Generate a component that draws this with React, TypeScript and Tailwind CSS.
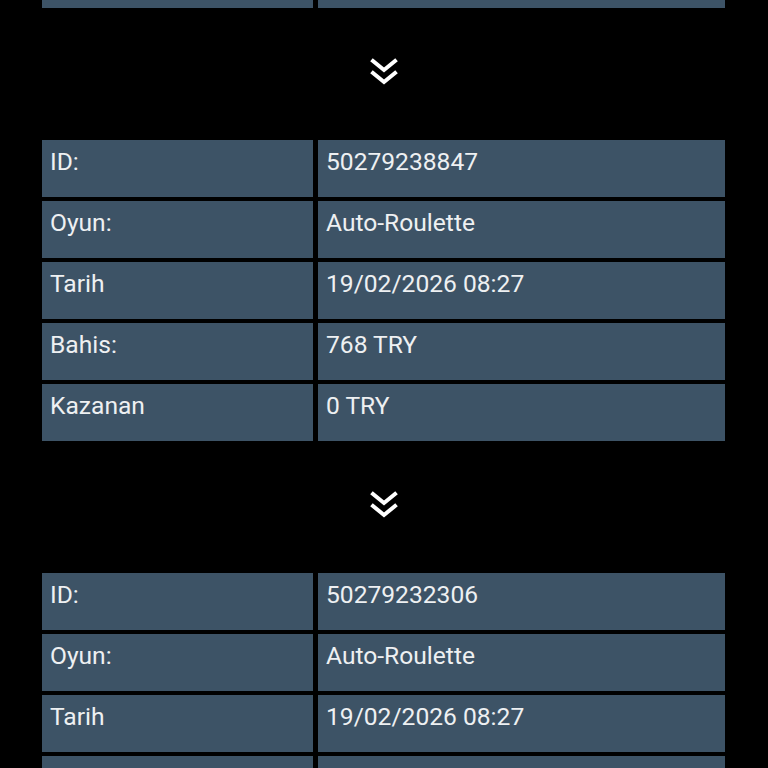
const bets = [
  { id: "50279238847", game: "Auto-Roulette", date: "19/02/2026 08:27", stake: "768 TRY", win: "0 TRY" },
  { id: "50279232306", game: "Auto-Roulette", date: "19/02/2026 08:27", stake: "768 TRY", win: "0 TRY" },
];

function Row({ label, value }: { label: string; value: string }) {
  return (
    <div className="grid grid-cols-[271px_1fr] gap-[5px]">
      <div className="h-[57px] bg-[#3d5366] px-2 pt-[4px] leading-[36px]">{label}</div>
      <div className="h-[57px] bg-[#3d5366] px-2 pt-[4px] leading-[36px]">{value}</div>
    </div>
  );
}

function Chevrons() {
  return (
    <div className="flex justify-center pt-[49px] pb-[54px]">
      <svg width="30" height="29" viewBox="0 0 30 29" fill="none" stroke="#fff" strokeWidth="4" strokeLinecap="square">
        <polyline points="4,4 15,13 26,4" />
        <polyline points="4,16 15,25 26,16" />
      </svg>
    </div>
  );
}

export default function App() {
  return (
    <div className="min-h-screen overflow-hidden bg-black px-[42px] pr-[43px] font-['Roboto',sans-serif] text-[24.6px] text-[#eef0f2]">
      {/* tail of the previous table */}
      <div className="-mt-[49px]">
        <Row label="" value="" />
      </div>

      {bets.map((b) => (
        <div key={b.id}>
          <Chevrons />
          <div className="flex flex-col gap-[4px]">
            <Row label="ID:" value={b.id} />
            <Row label="Oyun:" value={b.game} />
            <Row label="Tarih" value={b.date} />
            <Row label="Bahis:" value={b.stake} />
            <Row label="Kazanan" value={b.win} />
          </div>
        </div>
      ))}
    </div>
  );
}
